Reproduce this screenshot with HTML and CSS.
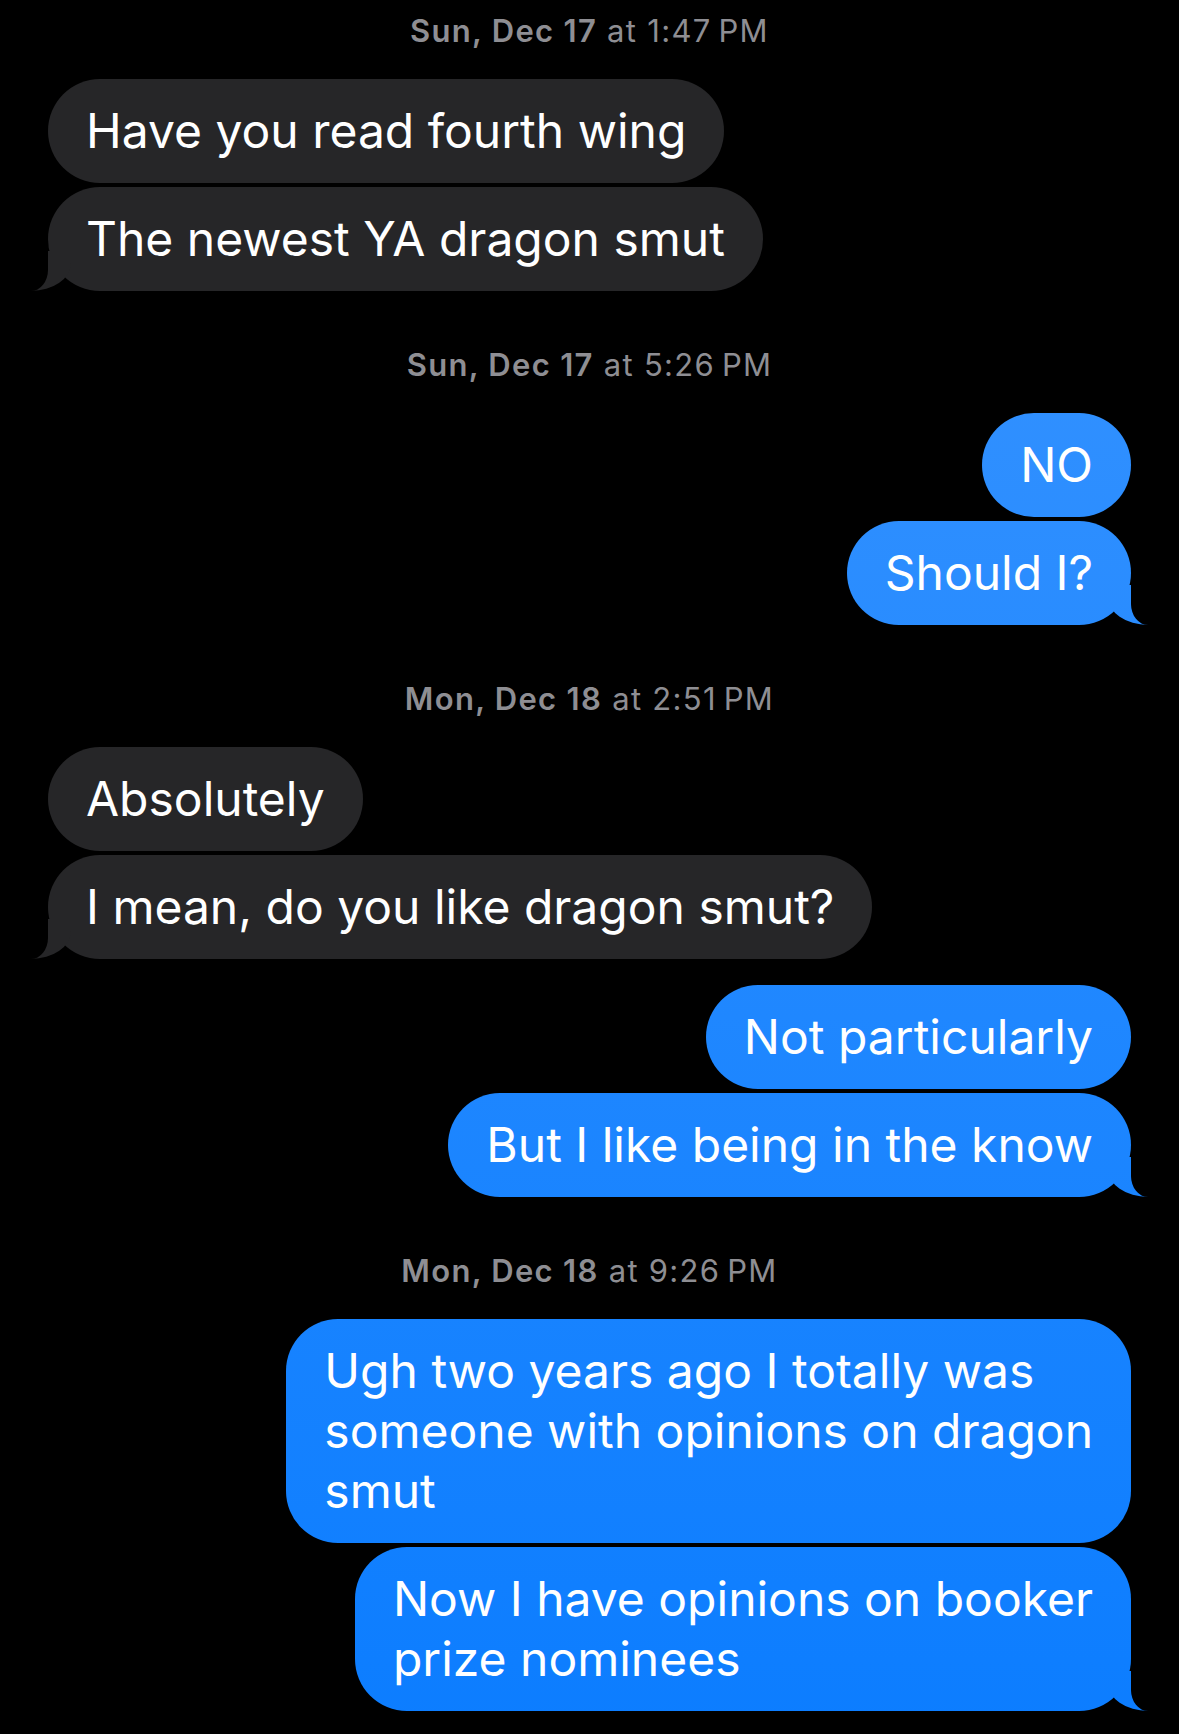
FILE: index.html
```html
<!DOCTYPE html>
<html lang="en">
<head>
    <meta charset="UTF-8">
    <meta name="viewport" content="width=device-width, initial-scale=1.0">
    <title>Messages</title>
    <link rel="stylesheet" href="styles.css">
</head>
<body>
    <div class="thread">
        <div class="stamp"><b>Sun, Dec 17</b> at 1:47&#8201;PM</div>
        <div class="group in">
            <div class="bubble">Have you read fourth wing</div>
            <div class="bubble tail">The newest YA dragon smut</div>
        </div>

        <div class="stamp"><b>Sun, Dec 17</b> at 5:26&#8201;PM</div>
        <div class="group out">
            <div class="bubble">NO</div>
            <div class="bubble tail">Should I?</div>
        </div>

        <div class="stamp"><b>Mon, Dec 18</b> at 2:51&#8201;PM</div>
        <div class="group in">
            <div class="bubble">Absolutely</div>
            <div class="bubble tail">I mean, do you like dragon smut?</div>
        </div>
        <div class="group out">
            <div class="bubble">Not particularly</div>
            <div class="bubble tail">But I like being in the know</div>
        </div>

        <div class="stamp"><b>Mon, Dec 18</b> at 9:26&#8201;PM</div>
        <div class="group out">
            <div class="bubble">Ugh two years ago I totally was<br>someone with opinions on dragon<br>smut</div>
            <div class="bubble tail">Now I have opinions on booker<br>prize nominees</div>
        </div>
    </div>
</body>
</html>
```

FILE: styles.css
```css
body {
    margin: 0;
    background-color: #000;
    font-family: Inter, "Noto Sans", sans-serif;
    color: #fff;
}

.thread {
    padding: 11px 48px 0;
}

/* date / time separators */
.stamp {
    text-align: center;
    font-size: 31px;
    line-height: 40px;
    letter-spacing: 1.3px;
    color: #8e8e93;
    margin: 54px 0 28px;
}

.stamp:first-child {
    margin-top: 0;
}

.stamp b {
    font-weight: 600;
}

.group {
    display: flex;
    flex-direction: column;
    gap: 4px;
}

.group + .group {
    margin-top: 26px;
}

.group.in {
    align-items: flex-start;
}

.group.out {
    align-items: flex-end;
}

.bubble {
    position: relative;
    padding: 22px 38px;
    font-size: 48px;
    line-height: 60px;
    border-radius: 52px;
    white-space: nowrap;
}

.in .bubble {
    background-color: #262628;
}

.out .bubble {
    background: linear-gradient(to bottom, #3a95ff 0, #0c7dff 1734px) fixed;
}

/* the little curl under the last bubble */
.tail::before,
.tail::after {
    content: "";
    position: absolute;
    bottom: 0;
    height: 40px;
}

.out .tail::before {
    right: -17px;
    width: 40px;
    background: linear-gradient(to bottom, #3a95ff 0, #0c7dff 1734px) fixed;
    border-bottom-left-radius: 40px 28px;
}

.out .tail::after {
    left: 100%;
    width: 22px;
    background-color: #000;
    border-bottom-left-radius: 17px 21px;
}

.in .tail::before {
    left: -17px;
    width: 40px;
    background-color: #262628;
    border-bottom-right-radius: 40px 28px;
}

.in .tail::after {
    right: 100%;
    width: 22px;
    background-color: #000;
    border-bottom-right-radius: 17px 21px;
}
```
